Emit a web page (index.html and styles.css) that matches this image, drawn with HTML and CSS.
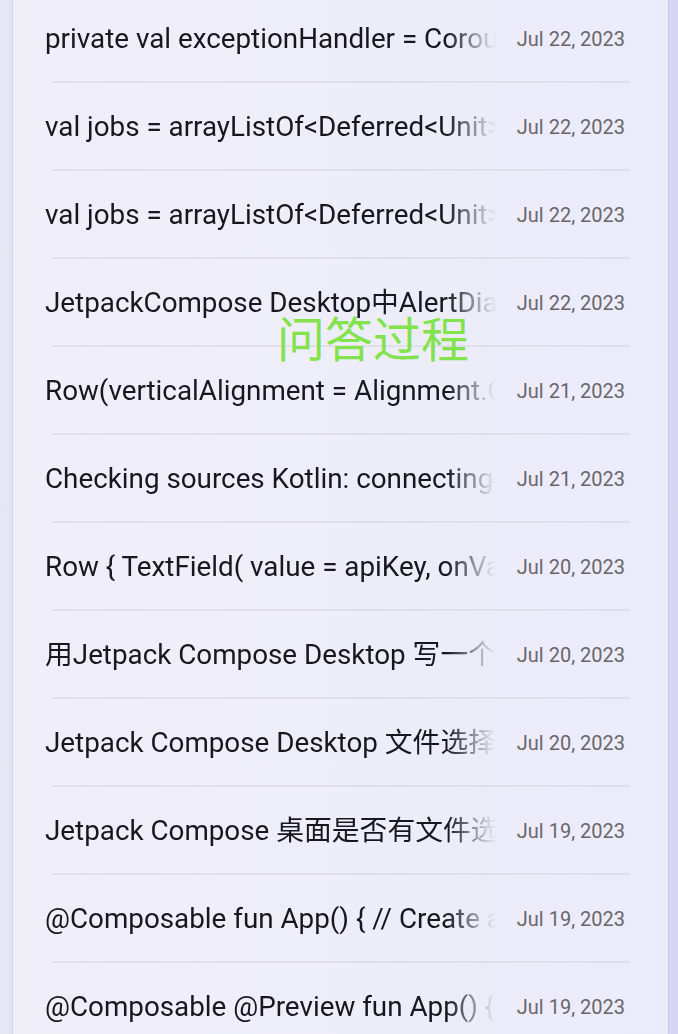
FILE: index.html
```html
<!DOCTYPE html>
<html>
<head>
<meta charset="utf-8">
<link rel="stylesheet" href="styles.css">
</head>
<body>
<div class="page">
  <div class="card">
    <ul class="list">
      <li class="row"><span class="title">private val exceptionHandler = CoroutineExceptionHandler</span><span class="date">Jul 22, 2023</span></li>
      <li class="row"><span class="title">val jobs = arrayListOf&lt;Deferred&lt;Unit&gt;&gt;()</span><span class="date">Jul 22, 2023</span></li>
      <li class="row"><span class="title">val jobs = arrayListOf&lt;Deferred&lt;Unit&gt;&gt;()</span><span class="date">Jul 22, 2023</span></li>
      <li class="row"><span class="title">JetpackCompose Desktop中AlertDialog</span><span class="date">Jul 22, 2023</span></li>
      <li class="row"><span class="title">Row(verticalAlignment = Alignment.CenterVertically)</span><span class="date">Jul 21, 2023</span></li>
      <li class="row"><span class="title">Checking sources Kotlin: connecting to daemon</span><span class="date">Jul 21, 2023</span></li>
      <li class="row"><span class="title">Row { TextField( value = apiKey, onValueChange</span><span class="date">Jul 20, 2023</span></li>
      <li class="row"><span class="title">用Jetpack Compose Desktop 写一个文件</span><span class="date">Jul 20, 2023</span></li>
      <li class="row"><span class="title">Jetpack Compose Desktop 文件选择器</span><span class="date">Jul 20, 2023</span></li>
      <li class="row"><span class="title">Jetpack Compose 桌面是否有文件选择器</span><span class="date">Jul 19, 2023</span></li>
      <li class="row"><span class="title">@Composable fun App() { // Create a window</span><span class="date">Jul 19, 2023</span></li>
      <li class="row"><span class="title">@Composable @Preview fun App() { var</span><span class="date">Jul 19, 2023</span></li>
    </ul>
  </div>
  <div class="watermark">问答过程</div>
</div>
</body>
</html>
```

FILE: styles.css
```css
html, body {
  margin: 0;
  padding: 0;
  height: 100%;
  overflow: hidden;
}
body {
  background: #e7e6f4;
  font-family: Roboto, "Noto Sans CJK SC", sans-serif;
}
.page {
  position: relative;
  display: flex;
  height: 1034px;
  background: linear-gradient(to right, #e8e7f4 0, #e5e4f2 11px, #d9d7f4 669px, #d6d4f2 678px);
}
.card {
  margin-left: 12px;
  width: 657px;
  border-left: 1px solid #d3d2e0;
  border-right: 1px solid #cbc9e8;
  box-sizing: border-box;
  background: linear-gradient(to right, #f0eff8, #ebebfa);
  overflow: hidden;
}
.list {
  list-style: none;
  margin: -5px 0 0 0;
  padding: 0;
}
.row {
  position: relative;
  display: flex;
  align-items: center;
  height: 88px;
  padding: 0 43px 0 32px;
}
.row::after {
  content: "";
  position: absolute;
  left: 39px;
  right: 38px;
  bottom: 0;
  height: 2px;
  background: #dfdee9;
}
.title {
  flex: 1;
  min-width: 0;
  white-space: nowrap;
  overflow: hidden;
  font-size: 27.8px;
  line-height: 36px;
  color: #18171d;
  -webkit-mask-image: linear-gradient(to right, #000 0, #000 calc(100% - 50px), rgba(0,0,0,0.08) calc(100% - 6px), rgba(0,0,0,0) 100%);
  mask-image: linear-gradient(to right, #000 0, #000 calc(100% - 50px), rgba(0,0,0,0.08) calc(100% - 6px), rgba(0,0,0,0) 100%);
}
.date {
  flex: none;
  margin-left: 20px;
  font-size: 20px;
  color: #67666e;
}
.watermark {
  position: absolute;
  left: 277px;
  top: 308px;
  font-size: 48px;
  color: #82e34c;
  font-family: "Noto Sans CJK SC", sans-serif;
  line-height: 1.2;
}
```
